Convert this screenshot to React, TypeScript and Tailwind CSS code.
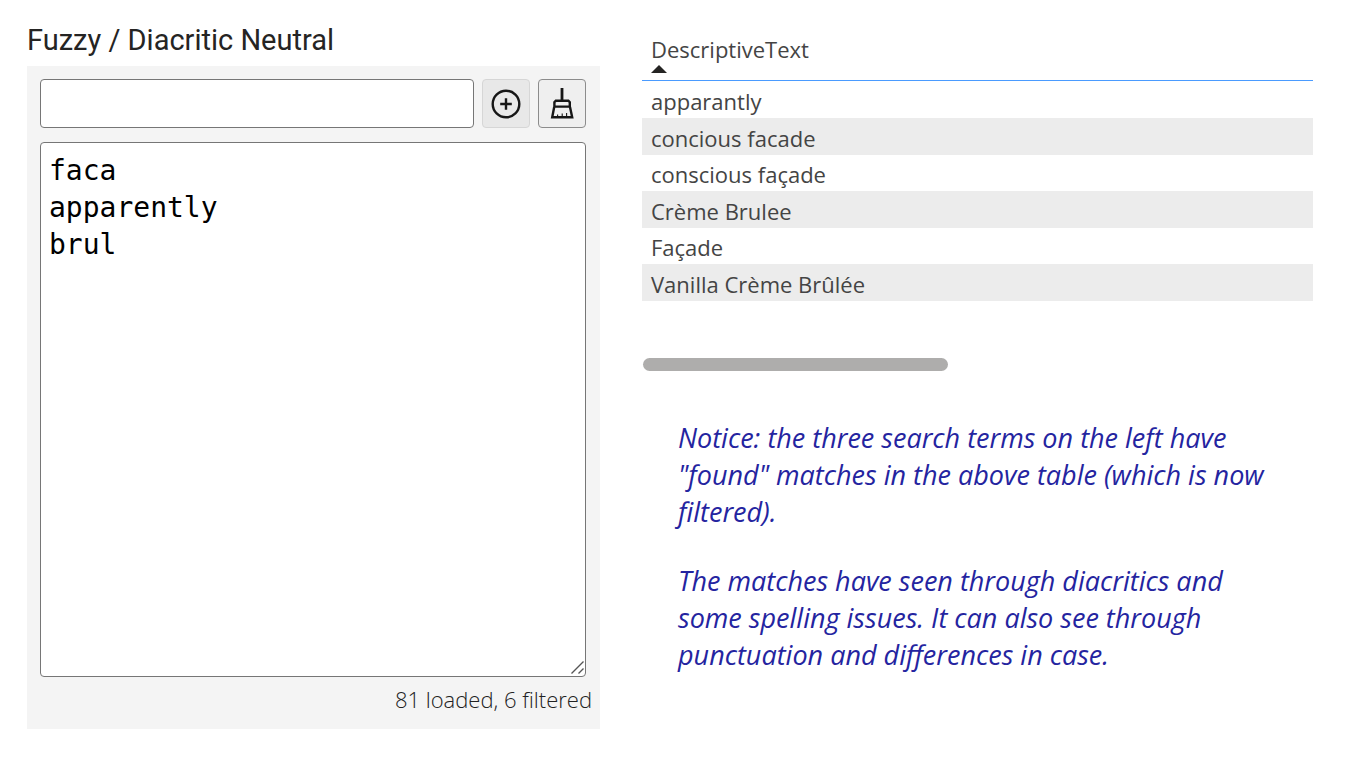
import React, { useState } from "react";

const rows = [
  "apparantly",
  "concious facade",
  "conscious façade",
  "Crème Brulee",
  "Façade",
  "Vanilla Crème Brûlée",
];

function AddIcon() {
  return (
    <svg width="30" height="30" viewBox="0 0 30 30" fill="none" stroke="#161616" strokeWidth="2.4" aria-hidden="true">
      <circle cx="15" cy="15" r="13.3" />
      <path d="M15 9.2v11.6M9.2 15h11.6" />
    </svg>
  );
}

function BroomIcon() {
  return (
    <svg width="24" height="32" viewBox="0 0 24 32" fill="none" stroke="#161616" strokeWidth="2.4" aria-hidden="true">
      <path d="M12 0v12.5" strokeWidth="2.8" />
      <path d="M4.4 19.4v-5.2l1.4-1.4h12.6l1.4 1.4v5.2M3.6 18.6h17" />
      <path d="M4.2 19L2.2 29.2h20L20 19" />
      <path d="M7.6 28.8v-2.4M12.2 28.8v-3.4M16.6 28.8v-3.8" strokeWidth="1.1" />
    </svg>
  );
}

function SearchPanel() {
  const [term, setTerm] = useState("");
  const [terms, setTerms] = useState("faca\napparently\nbrul");

  const addTerm = () => {
    if (!term.trim()) return;
    setTerms(terms ? terms + "\n" + term.trim() : term.trim());
    setTerm("");
  };

  return (
    <section>
      <h1 className="h-12 pt-1.5 font-['Roboto',sans-serif] text-[29px] leading-8 text-[#252423]">
        Fuzzy / Diacritic Neutral
      </h1>
      <div className="bg-[#f4f4f4] pt-[13px] pr-[14px] pb-3 pl-[13px]">
        <div className="flex gap-2">
          <input
            type="text"
            aria-label="Search term"
            value={term}
            onChange={(e) => setTerm(e.target.value)}
            className="h-[49px] min-w-0 flex-1 rounded border border-[#767676] bg-white px-2 font-['DejaVu_Sans_Mono',monospace] text-[28px]"
          />
          <button
            type="button"
            aria-label="Add term"
            onClick={addTerm}
            className="flex h-[49px] w-12 shrink-0 items-center justify-center rounded border border-[#d6d6d6] bg-[#e8e8e8]"
          >
            <AddIcon />
          </button>
          <button
            type="button"
            aria-label="Clear terms"
            onClick={() => setTerms("")}
            className="flex h-[49px] w-12 shrink-0 items-center justify-center rounded border border-[#8c8c8c] bg-[#efefef]"
          >
            <BroomIcon />
          </button>
        </div>
        <div className="relative mt-[14px]">
          <textarea
            aria-label="Search terms"
            value={terms}
            spellCheck={false}
            onChange={(e) => setTerms(e.target.value)}
            className="block h-[535px] w-full resize-none rounded border border-[#767676] bg-white px-2 py-[9px] font-['DejaVu_Sans_Mono',monospace] text-[28px] leading-[37px] text-black"
          />
          <svg
            width="13"
            height="13"
            viewBox="0 0 13 13"
            stroke="#555555"
            strokeWidth="1.4"
            className="pointer-events-none absolute right-[2px] bottom-[3px]"
            aria-hidden="true"
          >
            <path d="M0.5 12.5L12.5 0.5M7.5 12.5l5-5" />
          </svg>
        </div>
        <p className="-mr-[6px] mt-1.5 mb-0.5 text-right text-[22px] leading-8 font-light text-[#222222]">
          81 loaded, 6 filtered
        </p>
      </div>
    </section>
  );
}

function ResultsTable() {
  return (
    <table className="w-full border-separate border-spacing-0 text-left text-[22px] leading-8 text-[#444444]">
      <thead>
        <tr>
          <th scope="col" aria-sort="ascending" className="h-[63px] border-b border-[#4a9bff] px-[9px] pt-[15px] pb-0 align-top font-normal">
            DescriptiveText
            <svg width="16" height="8" viewBox="0 0 16 8" className="block" aria-hidden="true">
              <path d="M0 8L8 0l8 8z" fill="#252423" />
            </svg>
          </th>
        </tr>
      </thead>
      <tbody>
        {rows.map((row) => (
          <tr key={row} className="h-9 first:h-[37px] even:h-[37px] even:bg-[#ececec]">
            <td className="px-[9px] pt-[2px] pb-0">{row}</td>
          </tr>
        ))}
      </tbody>
    </table>
  );
}

export default function App() {
  return (
    <main className="grid grid-cols-[573fr_671fr] items-start gap-[42px] bg-white py-[18px] pr-[53px] pl-[27px] font-['Open_Sans','Noto_Sans',sans-serif]">
      <SearchPanel />
      <section>
        <ResultsTable />
        <div className="mt-[57px] ml-px h-[13px] w-[305px] rounded-full bg-[#aeadac]" />
        <div className="mt-12 flex flex-col gap-8 pl-9 text-[27px] leading-[37px] text-[#2424a0] italic">
          <p>
            Notice: the three search terms on the left have
            <br />
            "found" matches in the above table (which is now
            <br />
            filtered).
          </p>
          <p>
            The matches have seen through diacritics and
            <br />
            some spelling issues. It can also see through
            <br />
            punctuation and differences in case.
          </p>
        </div>
      </section>
    </main>
  );
}
